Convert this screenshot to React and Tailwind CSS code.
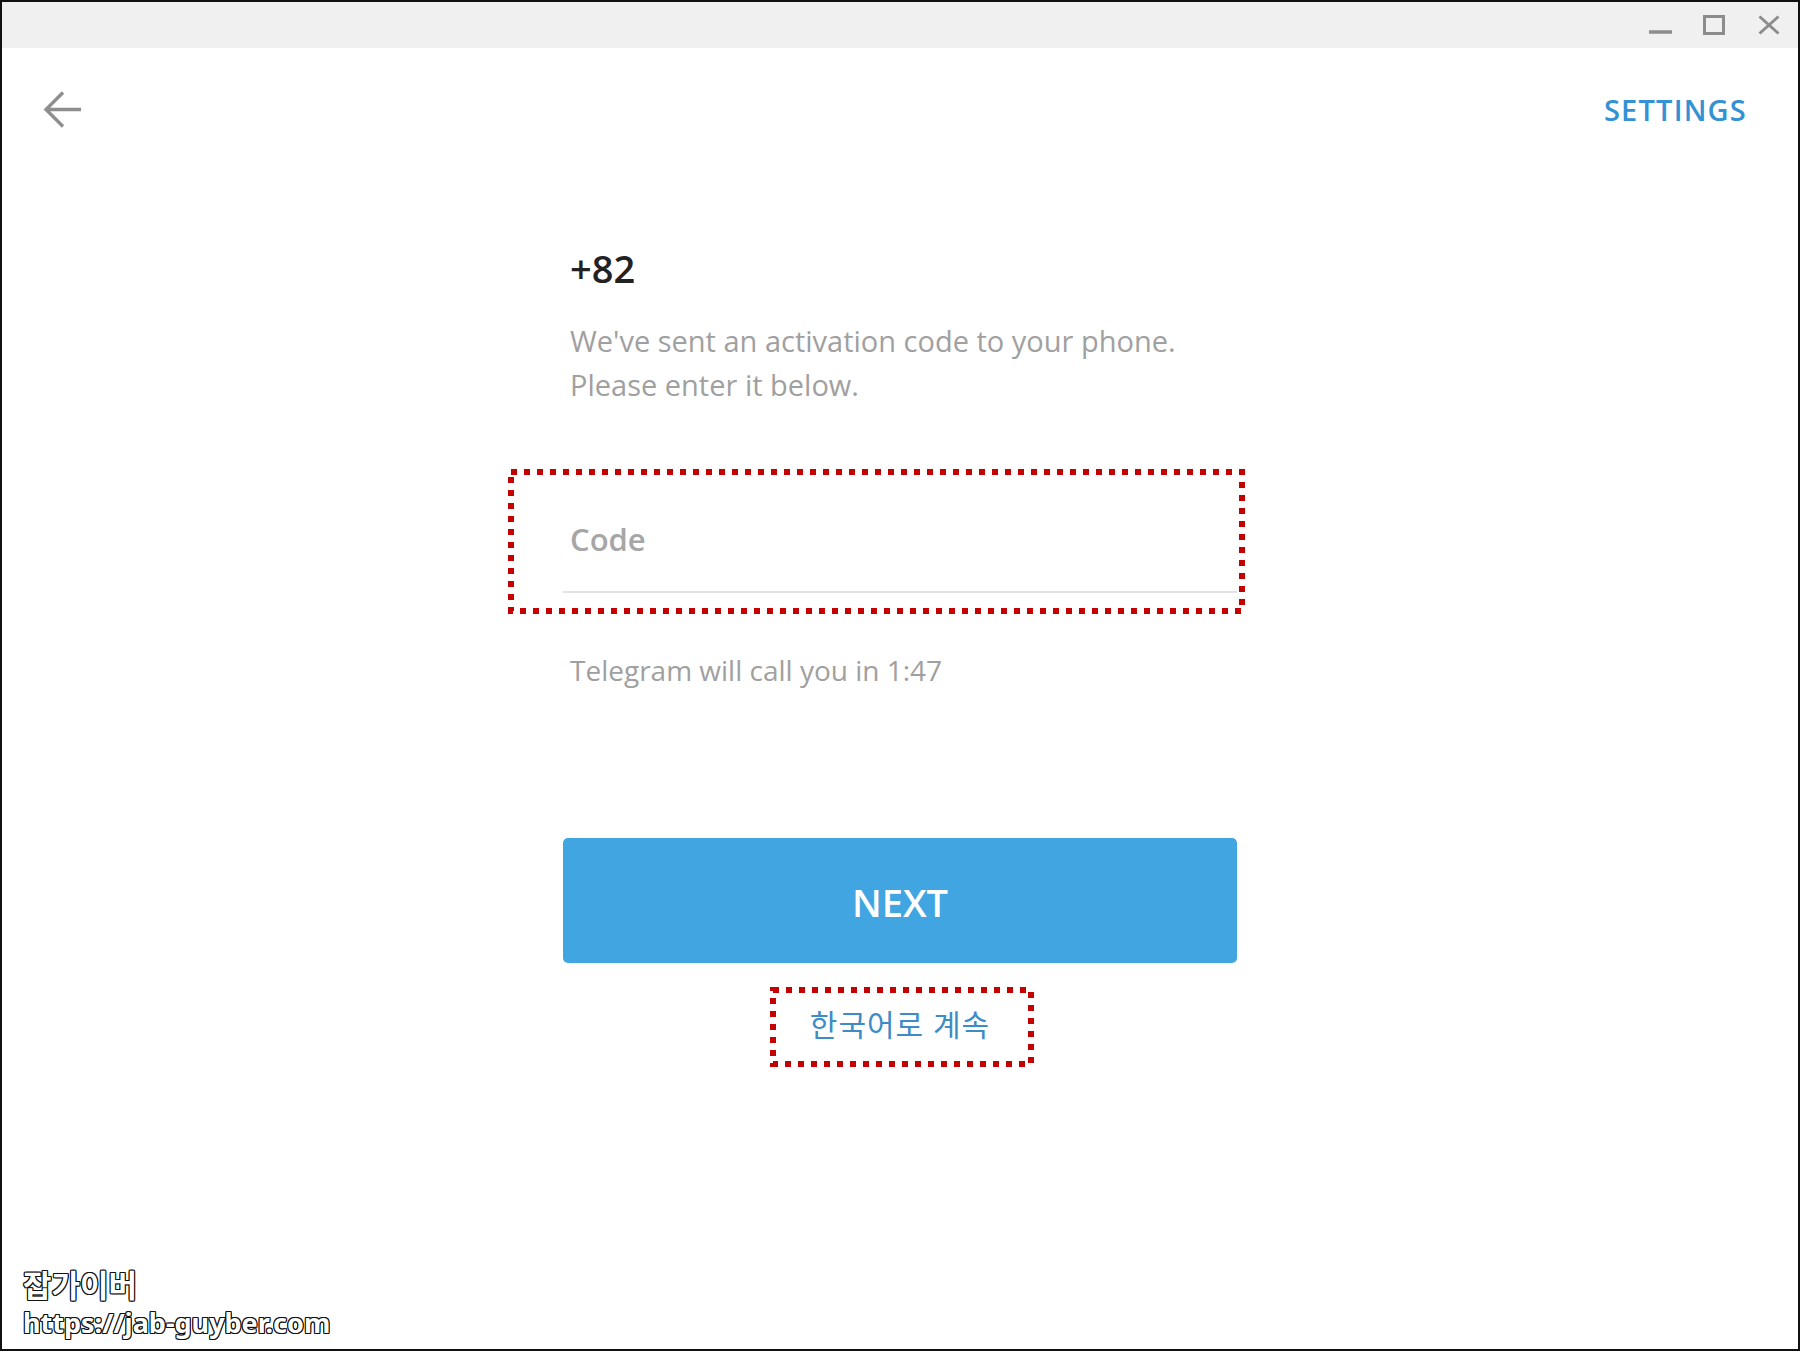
import React from "react";

// red dotted annotation box drawn over content
const DottedBox = ({ width, height, className }) => (
  <svg
    width={width}
    height={height}
    className={`pointer-events-none absolute ${className}`}
  >
    <rect
      x="3"
      y="3"
      width={width - 6}
      height={height - 6}
      fill="none"
      stroke="#c40000"
      strokeWidth="6"
      strokeDasharray="6 7"
    />
  </svg>
);

const TitleBar = () => (
  <div className="flex h-[46px] items-center justify-end bg-[#f0f0f0] pr-[18px]">
    <svg width="24" height="20" viewBox="0 0 24 20" className="mr-[30px]">
      <line x1="0" y1="17" x2="23" y2="17" stroke="#8c8c8c" strokeWidth="3.5" />
    </svg>
    <svg width="22" height="20" viewBox="0 0 22 20" className="mr-[33px]">
      <rect x="1.5" y="1.5" width="19" height="17" fill="none" stroke="#8c8c8c" strokeWidth="3" />
    </svg>
    <svg width="22" height="20" viewBox="0 0 22 20">
      <path d="M1.5 1.5 L20.5 18.5 M20.5 1.5 L1.5 18.5" stroke="#8c8c8c" strokeWidth="3" />
    </svg>
  </div>
);

export default function App() {
  return (
    <div className="relative h-[1351px] w-[1800px] overflow-hidden border-2 border-[#111] bg-white font-['Open_Sans','Noto_Sans_CJK_KR',sans-serif]">
      <TitleBar />

      {/* header */}
      <div className="flex h-[124px] items-center justify-between pl-[41px] pr-[51px]">
        <svg width="40" height="40" viewBox="0 0 40 40">
          <path
            d="M3 19.5 H38 M20 2.5 L3 19.5 L20 36.5"
            fill="none"
            stroke="#8e8e8e"
            strokeWidth="3.4"
          />
        </svg>
        <span className="text-[29px] font-semibold tracking-[1.2px] text-[#3392d3]">SETTINGS</span>
      </div>

      {/* form */}
      <div className="mx-auto w-[674px]">
        <div className="mt-[70px] pl-[7px] text-[38px] font-semibold leading-[52px] text-[#222]">+82</div>
        <p className="mt-[25px] pl-[7px] text-[29px] leading-[44px] text-[#a0a0a0]">
          We've sent an activation code to your phone.
          <br />
          Please enter it below.
        </p>

        <div className="relative mt-[92px] h-[94px] border-b-2 border-[#e4e4e4] pl-[7px] pt-[19px]">
          <span className="text-[31px] font-semibold leading-[42px] text-[#a6a6a6]">Code</span>
          <DottedBox width={737} height={145} className="left-[-55px] top-[-30px]" />
        </div>

        <p className="mt-[57px] pl-[7px] text-[28px] leading-[40px] text-[#a0a0a0]">
          Telegram will call you in 1:47
        </p>

        <button
          type="button"
          className="mt-[148px] flex h-[125px] w-full items-center justify-center rounded-[5px] bg-[#40a5e0] pt-[4px] text-[38px] font-semibold text-white"
        >
          NEXT
        </button>

        <div className="mt-[42px] flex justify-center">
          <span className="relative text-[30px] leading-[40px] tracking-[1px] text-[#3d8cc4]">
            한국어로 계속
            <DottedBox width={264} height={80} className="left-[-40px] top-[-18px]" />
          </span>
        </div>
      </div>

      {/* watermark */}
      <div className="absolute left-[21px] top-[1262px] font-bold text-white [text-shadow:1px_0_0_#111,-1px_0_0_#111,0_1px_0_#111,0_-1px_0_#111,1px_1px_0_#111,-1px_-1px_0_#111,1px_-1px_0_#111,-1px_1px_0_#111]">
        <div className="font-['Noto_Sans_CJK_KR',sans-serif] text-[31px] leading-[40px]">잡가이버</div>
        <div className="font-['Noto_Sans','Noto_Sans_CJK_KR',sans-serif] text-[27px] leading-[38px]">https://jab-guyber.com</div>
      </div>
    </div>
  );
}
